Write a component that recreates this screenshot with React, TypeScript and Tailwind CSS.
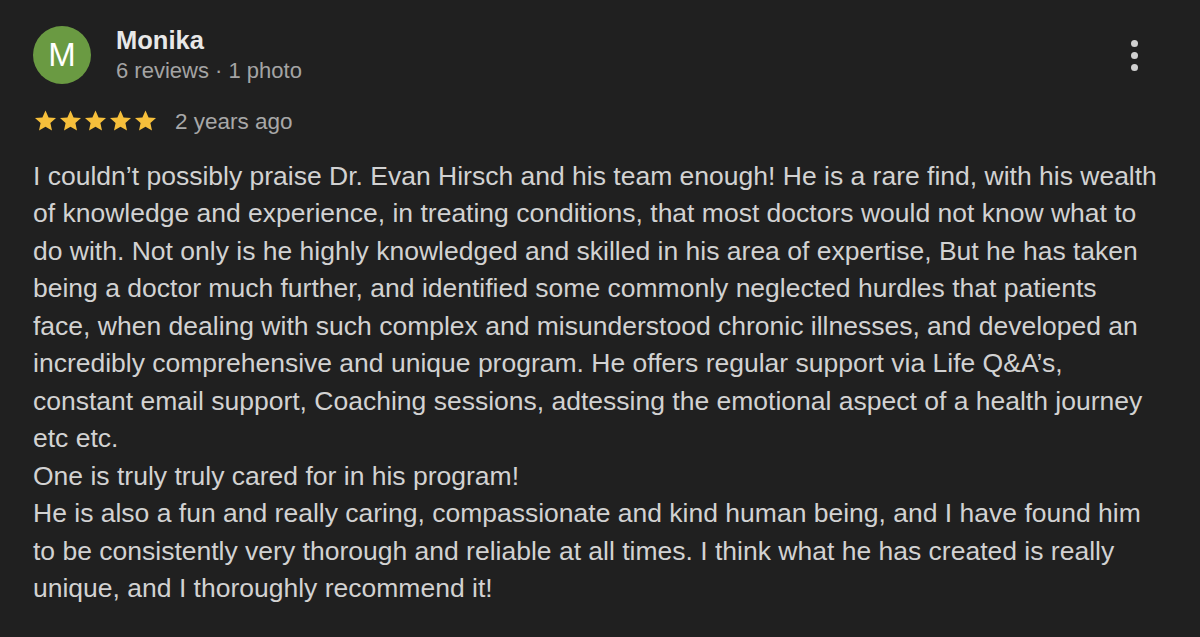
const lines = [
  "I couldn’t possibly praise Dr. Evan Hirsch and his team enough! He is a rare find, with his wealth",
  "of knowledge and experience, in treating conditions, that most doctors would not know what to",
  "do with. Not only is he highly knowledged and skilled in his area of expertise, But he has taken",
  "being a doctor much further, and identified some commonly neglected hurdles that patients",
  "face, when dealing with such complex and misunderstood chronic illnesses, and developed an",
  "incredibly comprehensive and unique program. He offers regular support via Life Q&A’s,",
  "constant email support, Coaching sessions, adtessing the emotional aspect of a health journey",
  "etc etc.",
  "One is truly truly cared for in his program!",
  "He is also a fun and really caring, compassionate and kind human being, and I have found him",
  "to be consistently very thorough and reliable at all times. I think what he has created is really",
  "unique, and I thoroughly recommend it!",
];

function StarIcon() {
  return (
    <svg width="25" height="24" viewBox="0 0 24 24" className="block">
      <polygon
        points="12,1.5 15.1,8.4 22.5,9.1 16.9,14.1 18.5,21.5 12,17.7 5.5,21.5 7.1,14.1 1.5,9.1 8.9,8.4"
        fill="#f6bf3b"
      />
    </svg>
  );
}

export default function App() {
  return (
    <div className="w-[1200px] h-[637px] bg-[#202020] text-[#d2d2d2] overflow-hidden font-['Liberation_Sans',Arial,sans-serif]">
      <div className="px-[33px] pt-[26px]">
        {/* header */}
        <div className="flex items-start">
          <div className="w-[58px] h-[58px] rounded-full bg-[#6a9a42] flex items-center justify-center text-white text-[33px] shrink-0">
            M
          </div>
          <div className="ml-[25px] flex-1">
            <div className="text-[25.5px] font-bold text-[#e8e8e8] leading-[28px]">
              Monika
            </div>
            <div className="text-[22px] text-[#a4a4a4] leading-[28px] mt-[3px]">
              6 reviews · 1 photo
            </div>
          </div>
          <div className="flex flex-col gap-[5px] mt-[14px] mr-[29px]">
            <span className="w-[7px] h-[7px] rounded-full bg-[#d0d0d0]" />
            <span className="w-[7px] h-[7px] rounded-full bg-[#d0d0d0]" />
            <span className="w-[7px] h-[7px] rounded-full bg-[#d0d0d0]" />
          </div>
        </div>

        {/* rating */}
        <div className="flex items-center mt-[18px]">
          <div className="flex">
            {[0, 1, 2, 3, 4].map((i) => (
              <StarIcon key={i} />
            ))}
          </div>
          <span className="ml-[17px] text-[22.5px] text-[#a8a8a8] mt-[2px]">
            2 years ago
          </span>
        </div>

        {/* body */}
        <div className="mt-[19px] text-[26.5px] leading-[37.5px]">
          {lines.map((l, i) => (
            <div key={i} className="whitespace-nowrap">
              {l}
            </div>
          ))}
        </div>
      </div>
    </div>
  );
}
